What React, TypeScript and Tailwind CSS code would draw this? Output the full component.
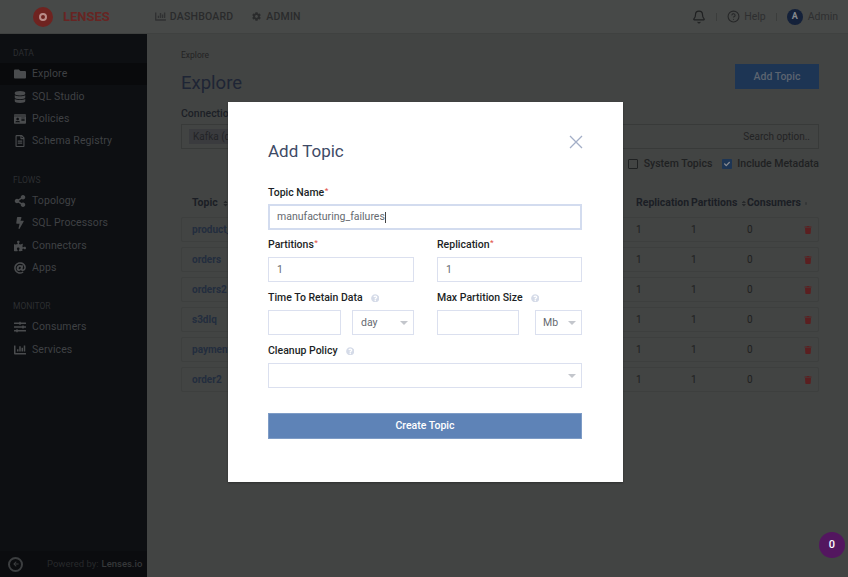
import React from "react";
import { HelpCircle, Bell, Trash2 } from "lucide-react";
import {
  FaFolder, FaDatabase, FaIdCard, FaRegFileAlt, FaShareAlt, FaBolt, FaPuzzlePiece, FaAt, FaSlidersH, FaChartBar, FaCog, FaTrash, FaQuestionCircle, FaCheck, FaArrowLeft, FaSort,
} from "react-icons/fa";

const font = { fontFamily: "Roboto, 'Liberation Sans', sans-serif" };

function NavItem({ icon, label, active }: { icon: React.ReactNode; label: string; active?: boolean }) {
  return (
    <div className={`flex items-center h-[22.4px] pl-[14px] gap-[6px] text-[10.5px] tracking-[0.1px] text-[#3f4144] ${active ? "bg-[#090a0c]" : ""}`}>
      <span className="w-[12px] flex justify-center text-[#4a4c4e] text-[12px]">{icon}</span>
      <span>{label}</span>
    </div>
  );
}

function Section({ title }: { title: string }) {
  return <div className="pl-[13px] text-[8.5px] text-[#2c2e31] leading-[10px]">{title}</div>;
}

function Th({ label, className }: { label: string; className: string }) {
  return (
    <div className={`flex items-center gap-[4px] ${className}`}>
      <span>{label}</span>
      <FaSort className="text-[7px] text-[#26282a]" />
    </div>
  );
}

function Row({ name }: { name: string }) {
  return (
    <div className="flex items-center h-[25px] mb-[5px] border border-[#3d3f3e] rounded-[2px] pl-[10px] text-[10px]">
      <span className="w-[444px] font-bold text-[#232d3e]">{name}</span>
      <span className="w-[55px] text-[#1f2020]">1</span>
      <span className="w-[56px] text-[#1f2020]">1</span>
      <span className="w-[57px] text-[#1f2020]">0</span>
      <FaTrash className="text-[8px] text-[#5a1f20]" />
    </div>
  );
}

function Label({ text, req, help }: { text: string; req?: boolean; help?: boolean }) {
  return (
    <div className="flex items-center h-[12px] text-[10.5px] font-medium text-[#1c1f26] leading-[12px]">
      <span>{text}</span>
      {req && <span className="text-[#e2574c] text-[8px] -mt-[5px] ml-[0.5px]">*</span>}
      {help && <FaQuestionCircle className="text-[8.5px] text-[#d5dbe8] ml-[8px]" />}
    </div>
  );
}

function Box({ className, children }: { className: string; children?: React.ReactNode }) {
  return (
    <div className={`flex items-center justify-between h-[25px] border border-[#dbe0ef] text-[10.5px] text-[#666a70] ${className}`}>
      {children}
    </div>
  );
}

const Caret = () => <span className="w-0 h-0 border-x-[4px] border-x-transparent border-t-[4px] border-t-[#c3c6cc]" />;

export default function App() {
  const topics = ["product_", "orders", "orders2", "s3dlq", "payment", "order2"];
  return (
    <div style={font} className="relative w-[848px] h-[577px] overflow-hidden bg-[#424443] flex flex-col">
      <header className="h-[34px] shrink-0 bg-[#474948] border-b border-[#3f4140] flex items-center text-[#242526]">
        <div className="ml-[33px] w-[20px] h-[20px] rounded-full bg-[#6f2320] flex items-center justify-center">
          <span className="w-[8px] h-[8px] rounded-full border-[2px] border-[#b98b88]" />
        </div>
        <span className="ml-[10px] text-[13px] font-bold text-[#672523]">LENSES</span>
        <FaChartBar className="ml-[45px] text-[11px] text-[#303132]" />
        <span className="ml-[4px] text-[10.5px] font-medium tracking-[0.2px] text-[#2a2b2c]">DASHBOARD</span>
        <FaCog className="ml-[19px] text-[9px] text-[#2a2b2c]" />
        <span className="ml-[5px] text-[10.5px] font-medium tracking-[0.2px] text-[#2a2b2c]">ADMIN</span>
        <div className="ml-auto flex items-center mr-[10px] text-[10.5px] text-[#2e2f30]">
          <Bell size={14} className="text-[#1f2021]" />
          <span className="mx-[10px] w-px h-[8px] bg-[#3b3d3c]" />
          <HelpCircle size={13} className="text-[#262728]" />
          <span className="ml-[4px]">Help</span>
          <span className="mx-[10px] w-px h-[8px] bg-[#3b3d3c]" />
          <span className="w-[16px] h-[16px] rounded-full bg-[#14213a] text-[#85888d] text-[9px] font-bold flex items-center justify-center">A</span>
          <span className="ml-[5px]">Admin</span>
        </div>
      </header>
      <div className="flex flex-1 min-h-0">
        <aside className="w-[147px] shrink-0 bg-[#0d0f12] flex flex-col pt-[14px]">
          <Section title="DATA" />
          <div className="mt-[5px]">
            <NavItem active icon={<FaFolder />} label="Explore" />
            <NavItem icon={<FaDatabase />} label="SQL Studio" />
            <NavItem icon={<FaIdCard />} label="Policies" />
            <NavItem icon={<FaRegFileAlt />} label="Schema Registry" />
          </div>
          <div className="mt-[22px]"><Section title="FLOWS" /></div>
          <div className="mt-[5px]">
            <NavItem icon={<FaShareAlt />} label="Topology" />
            <NavItem icon={<FaBolt />} label="SQL Processors" />
            <NavItem icon={<FaPuzzlePiece />} label="Connectors" />
            <NavItem icon={<FaAt />} label="Apps" />
          </div>
          <div className="mt-[22px]"><Section title="MONITOR" /></div>
          <div className="mt-[5px]">
            <NavItem icon={<FaSlidersH />} label="Consumers" />
            <NavItem icon={<FaChartBar />} label="Services" />
          </div>
          <div className="mt-auto h-[26px] flex items-center bg-[#0b0c0f] pl-[8px]">
            <span className="w-[15px] h-[15px] rounded-full border-[2px] border-[#3c3e40] flex items-center justify-center">
              <FaArrowLeft className="text-[6px] text-[#3c3e40]" />
            </span>
            <span className="ml-[24px] text-[9.5px] text-[#27292b]">Powered by:</span>
            <span className="ml-[3px] text-[9.5px] font-medium text-[#36383a]">Lenses.io</span>
          </div>
        </aside>
        <main className="flex-1 pl-[34px] pr-[29px] pt-[15px] min-w-0">
          <div className="text-[8.5px] leading-[12px] text-[#222324]">Explore</div>
          <div className="flex justify-between items-start">
            <h1 className="mt-[9px] text-[18.5px] leading-[26px] text-[#1e2535]">Explore</h1>
            <button className="mt-[3px] w-[84px] h-[25px] bg-[#1d3554] text-[#5c6470] text-[10.5px] font-medium">Add Topic</button>
          </div>
          <div className="mt-[12px] text-[10.5px] font-medium leading-[12px] text-[#1c1f26]">Connection</div>
          <div className="mt-[4px] h-[25px] border border-[#383a39] flex items-center pl-[7px] pr-[8px] justify-between text-[10px]">
            <span className="bg-[#3a3b3e] px-[4px] text-[#232427]">Kafka (default)</span>
            <span className="text-[#222324]">Search option..</span>
          </div>
          <div className="mt-[9px] flex justify-end items-center h-[12px] text-[10.5px] font-medium text-[#1f2122]">
            <span className="w-[10px] h-[10px] border border-[#1f2122] rounded-[1px]" />
            <span className="ml-[6px]">System Topics</span>
            <span className="ml-[10px] w-[10px] h-[10px] bg-[#1d3554] rounded-[1px] flex items-center justify-center">
              <FaCheck className="text-[6px] text-[#8a8d92]" />
            </span>
            <span className="ml-[5px]">Include Metadata</span>
          </div>
          <div className="mt-[27px] flex items-center h-[12px] pl-[11px] text-[10.5px] font-bold text-[#1b1e25]">
            <Th label="Topic" className="w-[444px]" />
            <Th label="Replication" className="w-[55px]" />
            <Th label="Partitions" className="w-[56px]" />
            <Th label="Consumers" className="w-[60px]" />
          </div>
          <div className="mt-[8px]">
            {topics.map((t) => <Row key={t} name={t} />)}
          </div>
        </main>
      </div>

      <div className="absolute left-[228px] top-[102px] w-[395px] h-[380px] bg-white shadow-[0_1px_2px_rgba(0,0,0,0.3)] px-[40px] pt-[38px]">
        <div className="flex justify-between items-start">
          <h2 className="text-[17px] leading-[22px] text-[#3e4a66]">Add Topic</h2>
          <svg width="14" height="14" viewBox="0 0 14 14" className="-mt-[5px] -mr-[0px]" fill="none" stroke="#a3aec7" strokeWidth="1.3">
            <path d="M1 1 13 13M13 1 1 13" />
          </svg>
        </div>
        <div className="mt-[25px]"><Label text="Topic Name" req /></div>
        <div className="mt-[5px] h-[26px] w-[314px] border-2 border-[#d3dcef] flex items-center pl-[7px] text-[10.5px] text-[#666a70]">
          manufacturing_failures<span className="w-px h-[11px] bg-[#444]" />
        </div>
        <div className="mt-[9px] flex gap-[23px]">
          <div className="w-[146px]">
            <Label text="Partitions" req />
            <Box className="mt-[6px] pl-[8px]">1</Box>
          </div>
          <div className="w-[145px]">
            <Label text="Replication" req />
            <Box className="mt-[6px] pl-[8px]">1</Box>
          </div>
        </div>
        <div className="mt-[10px] flex gap-[23px]">
          <div className="w-[146px]">
            <Label text="Time To Retain Data" help />
            <div className="mt-[6px] flex gap-[11px]">
              <Box className="w-[73px]" />
              <Box className="w-[62px] pl-[8px] pr-[5px]">day<Caret /></Box>
            </div>
          </div>
          <div className="w-[145px]">
            <Label text="Max Partition Size" help />
            <div className="mt-[6px] flex gap-[16px]">
              <Box className="w-[82px]" />
              <Box className="w-[47px] pl-[7px] pr-[5px]">Mb<Caret /></Box>
            </div>
          </div>
        </div>
        <div className="mt-[10px]"><Label text="Cleanup Policy" help /></div>
        <Box className="mt-[6px] w-[314px] justify-end pr-[5px]"><Caret /></Box>
        <button className="mt-[25px] block w-[314px] h-[26px] bg-[#5e83b7] border border-[#7e9cc6] text-white text-[10.5px] font-medium">Create Topic</button>
      </div>

      <div className="absolute left-[819px] top-[532px] w-[26px] h-[26px] rounded-full bg-[#53165f] text-white text-[11px] font-medium flex items-center justify-center">0</div>
    </div>
  );
}
